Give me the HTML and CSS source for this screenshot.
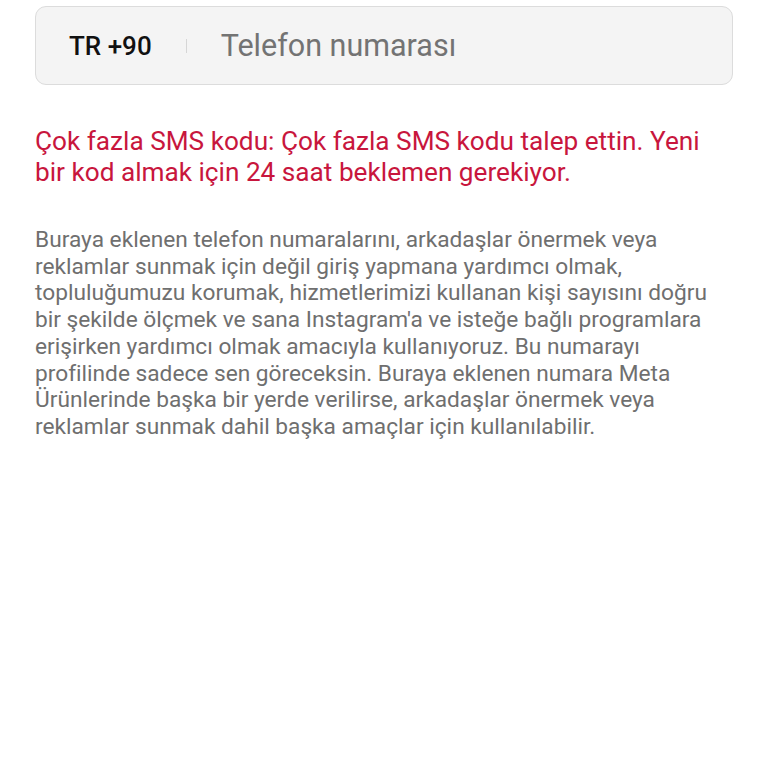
FILE: index.html
```html
<!DOCTYPE html>
<html lang="tr">
<head>
<meta charset="utf-8">
<link rel="stylesheet" href="styles.css">
</head>
<body>
<main class="page">
  <div class="phone-field">
    <span class="country">TR +90</span>
    <span class="divider"></span>
    <span class="placeholder">Telefon numarası</span>
  </div>
  <p class="error">Çok fazla SMS kodu: Çok fazla SMS kodu talep ettin. Yeni bir kod almak için 24 saat beklemen gerekiyor.</p>
  <p class="info">Buraya eklenen telefon numaralarını, arkadaşlar önermek veya reklamlar sunmak için değil giriş yapmana yardımcı olmak, topluluğumuzu korumak, hizmetlerimizi kullanan kişi sayısını doğru bir şekilde ölçmek ve sana Instagram'a ve isteğe bağlı programlara erişirken yardımcı olmak amacıyla kullanıyoruz. Bu numarayı profilinde sadece sen göreceksin. Buraya eklenen numara Meta Ürünlerinde başka bir yerde verilirse, arkadaşlar önermek veya reklamlar sunmak dahil başka amaçlar için kullanılabilir.</p>
</main>
</body>
</html>
```
FILE: styles.css
```css
html, body {
  margin: 0;
  padding: 0;
  background: #ffffff;
}
body {
  font-family: Roboto, "Noto Sans", sans-serif;
}
.page {
  padding: 6px 35px 0 35px;
}
.phone-field {
  display: flex;
  align-items: center;
  height: 79px;
  box-sizing: border-box;
  border: 1.5px solid #dcdcdc;
  border-radius: 11px;
  background: #f4f4f4;
  padding-left: 33px;
}
.country {
  font-size: 26px;
  font-weight: 500;
  color: #111;
}
.divider {
  width: 1px;
  height: 14px;
  background: #d6d6d6;
  margin: 0 34px 0 34px;
}
.placeholder {
  font-size: 30.5px;
  color: #737373;
}
.error {
  margin: 41px 0 0;
  font-size: 26.2px;
  line-height: 31px;
  color: #c8163d;
}
.info {
  margin: 39px 0 0;
  font-size: 22.7px;
  line-height: 26.7px;
  color: #6f6f6f;
}
```
